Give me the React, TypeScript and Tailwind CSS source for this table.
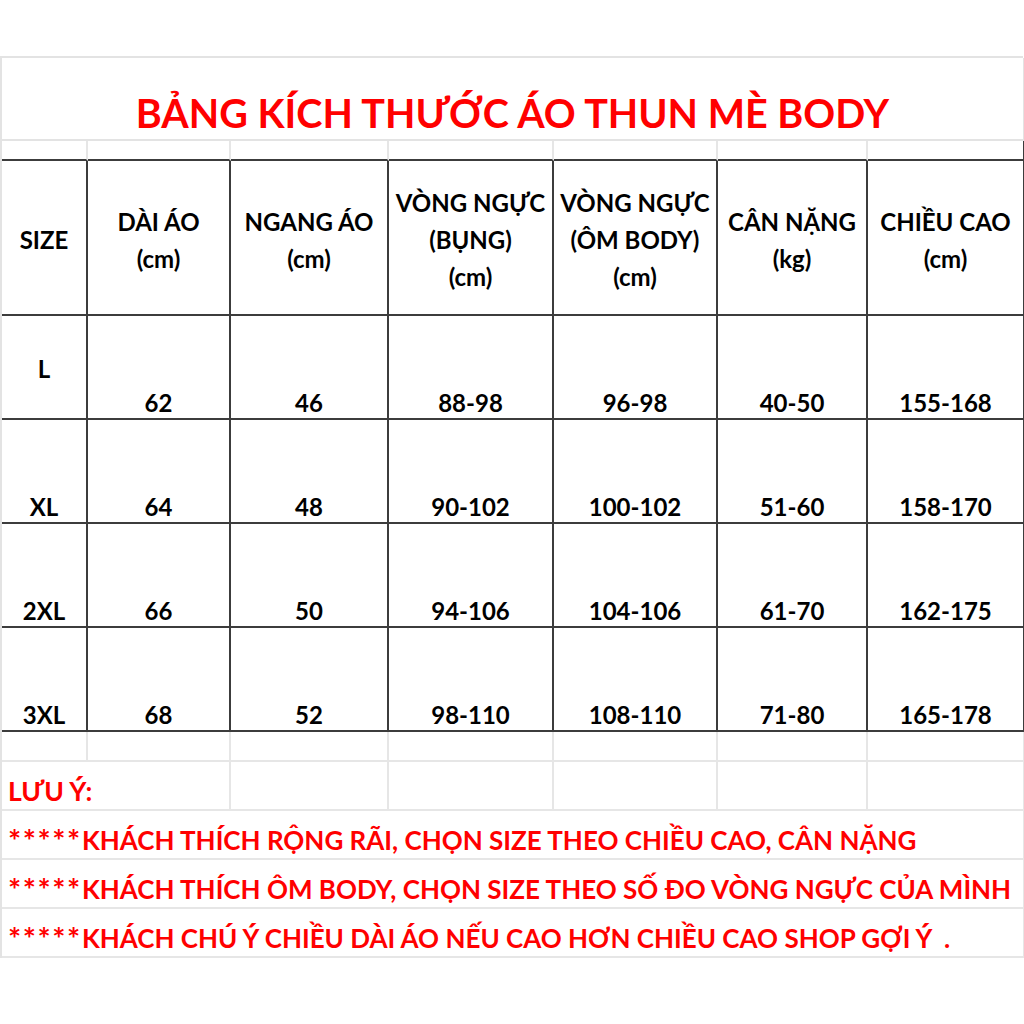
import React from "react";

const headers: string[][] = [
  ["SIZE"],
  ["DÀI ÁO", "(cm)"],
  ["NGANG ÁO", "(cm)"],
  ["VÒNG NGỰC", "(BỤNG)", "(cm)"],
  ["VÒNG NGỰC", "(ÔM BODY)", "(cm)"],
  ["CÂN NẶNG", "(kg)"],
  ["CHIỀU CAO", "(cm)"],
];

const rows: string[][] = [
  ["L", "62", "46", "88-98", "96-98", "40-50", "155-168"],
  ["XL", "64", "48", "90-102", "100-102", "51-60", "158-170"],
  ["2XL", "66", "50", "94-106", "104-106", "61-70", "162-175"],
  ["3XL", "68", "52", "98-110", "108-110", "71-80", "165-178"],
];

const notes = [
  "KHÁCH THÍCH RỘNG RÃI, CHỌN SIZE THEO CHIỀU CAO, CÂN NẶNG",
  "KHÁCH THÍCH ÔM BODY, CHỌN SIZE THEO SỐ ĐO VÒNG NGỰC CỦA MÌNH",
  "KHÁCH CHÚ Ý CHIỀU DÀI ÁO NẾU CAO HƠN CHIỀU CAO SHOP GỢI Ý  .",
];

export default function App() {
  return (
    <div
      className="w-[1024px] h-[1024px] bg-white pt-[56px]"
      style={{ fontFamily: "Lato, 'Open Sans', sans-serif" }}
    >
      <div className="grid grid-cols-[86px_143px_158px_165px_164px_150px_157px] w-[1023px] border-t-2 border-l-2 border-[#e3e3e3]">
        {/* Title */}
        <div className="col-span-7 h-[83px] border-r-2 border-b-2 border-[#e3e3e3] flex items-end justify-center pb-[1px]">
          <span className="text-[#ff0000] font-bold text-[39.5px] leading-[50px] whitespace-pre">
            BẢNG KÍCH THƯỚC ÁO THUN MÈ BODY
          </span>
        </div>
        {/* spacer row */}
        {headers.map((_, i) => (
          <div
            key={"sp" + i}
            className={
              "h-[20px] border-b-2 border-b-[#3c3c3c] " +
              (i === 6 ? "border-r-2 border-r-[#3c3c3c]" : "border-r-2 border-r-[#e6e6e6]")
            }
          />
        ))}
        {/* header row */}
        {headers.map((h, i) => (
          <div
            key={"h" + i}
            className="h-[155px] pt-[4px] border-r-2 border-b-2 border-[#3c3c3c] flex flex-col items-center justify-center text-black font-bold text-[24px] leading-[37px] text-center whitespace-nowrap"
          >
            {h.map((line, j) => (
              <span key={j}>{line}</span>
            ))}
          </div>
        ))}
        {/* data rows */}
        {rows.map((r, ri) =>
          r.map((c, ci) => (
            <div
              key={"r" + ri + "c" + ci}
              className={
                "h-[104px] border-r-2 border-b-2 border-[#3c3c3c] flex justify-center text-black font-bold text-[24px] leading-[30px] " +
                (ri === 0 && ci === 0 ? "items-center pt-[3px]" : "items-end")
              }
            >
              {c}
            </div>
          ))
        )}
        {/* empty row */}
        {headers.map((_, i) => (
          <div key={"e" + i} className="h-[30px] border-r-2 border-b-2 border-[#e6e6e6]" />
        ))}
        {/* LƯU Ý row */}
        <div className="col-span-2 h-[49px] border-r-2 border-b-2 border-[#e6e6e6] flex items-end pl-[6px] pb-[2px] text-[#ff0000] font-bold text-[26.5px] leading-[32px]">
          LƯU Ý:
        </div>
        {[0, 1, 2, 3, 4].map((i) => (
          <div key={"lu" + i} className="h-[49px] border-r-2 border-b-2 border-[#e6e6e6]" />
        ))}
        {notes.map((n, i) => (
          <div
            key={"n" + i}
            className="col-span-7 h-[49px] border-r-2 border-b-2 border-[#e6e6e6] flex items-end pl-[6px] pb-[2px] text-[#ff0000] font-bold text-[26px] leading-[32px] whitespace-pre"
          >
            <span className="text-[31px] tracking-[1.6px] leading-[32px]">*****</span>
            <span>{n}</span>
          </div>
        ))}
      </div>
    </div>
  );
}
